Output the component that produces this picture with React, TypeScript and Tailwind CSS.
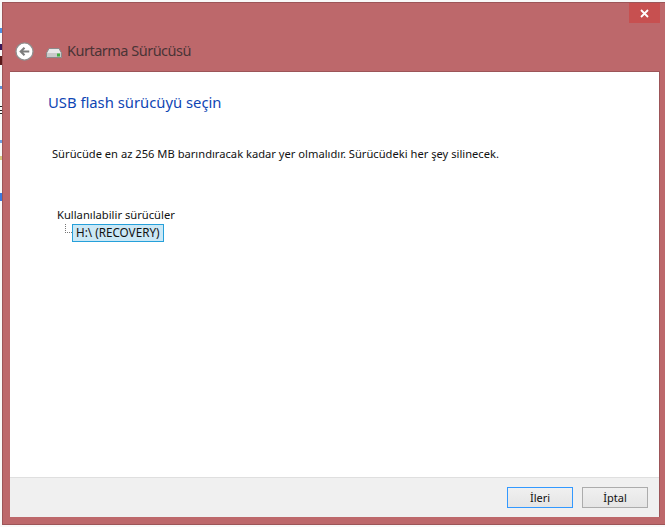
const marks = [
  { gap: 'h-[28px]', cls: 'h-[5px] bg-[#4f8fe0]' },
  { gap: 'h-[11px]', cls: 'h-[6px] bg-[#3a1458]' },
  { gap: 'h-[6px]', cls: 'h-[9px] bg-[#5a1a1a]' },
  { gap: 'h-[21px]', cls: 'h-[3px] bg-[#5f8fd8]' },
  { gap: 'h-[17px]', cls: 'h-[1px] bg-[#222222]' },
  { gap: 'h-[3px]', cls: 'h-[1px] bg-[#222222]' },
  { gap: 'h-[2px]', cls: 'h-[1px] bg-[#222222]' },
  { gap: 'h-[26px]', cls: 'h-[3px] bg-[#6f9fe0]' },
  { gap: 'h-[13px]', cls: 'h-[4px] bg-[#d8c880]' },
  { gap: 'h-[33px]', cls: 'h-[8px] bg-[#3a78e0]' },
];

export default function App() {
  const font = { fontFamily: '"Noto Sans", sans-serif' };
  return (
    <div className="w-[665px] h-[527px] bg-[#f8f8f8] overflow-hidden flex" style={font}>
      <div className="w-[2px] shrink-0 flex flex-col">
        {marks.map((m, i) => (
          <div key={i}>
            <div className={m.gap} />
            <div className={m.cls} />
          </div>
        ))}
      </div>
      <div className="mt-[2px] w-[663px] h-[523px] bg-[#bd686b] border-l border-t border-b border-[#9c5558] flex flex-col pl-[7px] pb-[7px]">
        <div className="h-[68px] shrink-0 relative">
          <div className="flex items-center h-full pt-[28px]">
            <svg width="19" height="19" viewBox="0 0 20 20" className="ml-[5px]">
              <circle cx="10" cy="10" r="9" fill="#ffffff" stroke="#8f8f8f" strokeWidth="1.4" />
              <path d="M15 10H6M10 6l-4 4 4 4" fill="none" stroke="#7d7d7d" strokeWidth="2.2" />
            </svg>
            <svg width="16" height="10" viewBox="0 0 16 10" className="ml-[12px] mt-[3px]">
              <path d="M3 0.5h10l2.5 4.5v4.5H0.5V5z" fill="#e8e8e8" stroke="#8a8a8a" />
              <rect x="1" y="5" width="14" height="4" fill="#c9c9c9" />
              <rect x="11" y="5.5" width="3" height="3" fill="#3fae3f" />
            </svg>
            <span className="ml-[5px] mb-[2px] text-[14.5px] leading-none tracking-[-0.5px] text-[#4a3436]">Kurtarma Sürücüsü</span>
          </div>
          <div className="absolute top-0 right-[5px] w-[31px] h-[20px] bg-[#c75050] flex items-center justify-center">
            <svg width="9" height="9" viewBox="0 0 9 9">
              <path d="M1 1l7 7M8 1l-7 7" stroke="#ffffff" strokeWidth="1.8" />
            </svg>
          </div>
        </div>
        <div className="flex-1 mr-[5px] bg-white border border-[#9c5558] border-b-0 border-l-0 flex flex-col min-h-0">
          <div className="flex-1 pl-[38px]">
            <h1 className="mt-[20px] text-[14.8px] leading-[20px] text-[#0f46b4] font-normal">USB flash sürücüyü seçin</h1>
            <p className="mt-[34px] ml-[4px] text-[11.17px] leading-[16px] text-[#111111]">Sürücüde en az 256 MB barındıracak kadar yer olmalıdır. Sürücüdeki her şey silinecek.</p>
            <div className="mt-[45px] ml-[9px] text-[11.2px] leading-[16px] text-[#111111]">Kullanılabilir sürücüler</div>
            <div className="ml-[17px] mt-[1px] flex items-start">
              <div className="w-[7px] h-[9px] border-l border-b border-dotted border-[#777777]" />
              <div className="w-[92px] h-[18px] pl-[3px] flex items-center border border-[#26a0da] bg-[#cbe8f6] text-[11.7px] whitespace-nowrap text-[#111111]">H:\ (RECOVERY)</div>
            </div>
          </div>
          <div className="h-[40px] shrink-0 bg-[#f0f0f0] border-t border-[#dfdfdf] flex items-start justify-end gap-[9px] pt-[9px] pr-[11px]">
            <button className="w-[66px] h-[21px] border border-[#3399ff] bg-gradient-to-b from-[#f0f0f0] to-[#e5e5e5] text-[11px] leading-none text-[#111111]">İleri</button>
            <button className="w-[66px] h-[21px] border border-[#acacac] bg-gradient-to-b from-[#f0f0f0] to-[#e5e5e5] text-[11px] leading-none text-[#111111]">İptal</button>
          </div>
        </div>
      </div>
    </div>
  );
}
